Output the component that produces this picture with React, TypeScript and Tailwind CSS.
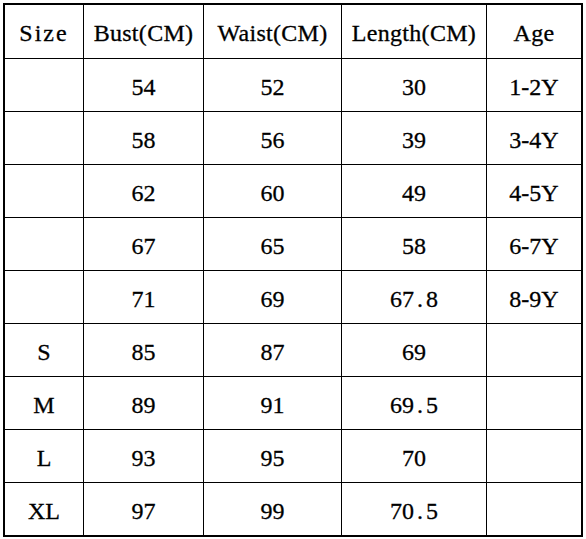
const headers = ['Size', 'Bust(CM)', 'Waist(CM)', 'Length(CM)', 'Age'];

const rows: string[][] = [
  ['', '54', '52', '30', '1-2Y'],
  ['', '58', '56', '39', '3-4Y'],
  ['', '62', '60', '49', '4-5Y'],
  ['', '67', '65', '58', '6-7Y'],
  ['', '71', '69', '67.8', '8-9Y'],
  ['S', '85', '87', '69', ''],
  ['M', '89', '91', '69.5', ''],
  ['L', '93', '95', '70', ''],
  ['XL', '97', '99', '70.5', ''],
];

export default function App() {
  return (
    <div className="w-[586px] h-[539px] bg-white pl-[3px] pt-[3px]">
      {/* size chart */}
      <div
        className="w-[580px] border-2 border-black bg-black grid grid-cols-[78px_119px_137px_144px_94px] grid-rows-[53px_repeat(9,52px)] gap-px text-black text-[24px] leading-none [-webkit-text-stroke:0.3px_black]"
        style={{ fontFamily: '"Liberation Serif", "Times New Roman", serif' }}
      >
        {headers.map((h, i) => (
          <div key={h} className="bg-white flex items-center justify-center pt-[3px]">
            <span className={i === 0 ? 'tracking-[2px]' : 'tracking-[0.3px]'}>{h}</span>
          </div>
        ))}
        {rows.map((row, r) =>
          row.map((cell, c) => (
            <div key={`${r}-${c}`} className="bg-white flex items-center justify-center pt-[4px]">
              {cell.includes('.') ? (
                <span>
                  {cell.split('.')[0]}
                  <span className="inline-block w-[12px] text-center">.</span>
                  {cell.split('.')[1]}
                </span>
              ) : (
                cell
              )}
            </div>
          ))
        )}
      </div>
    </div>
  );
}
